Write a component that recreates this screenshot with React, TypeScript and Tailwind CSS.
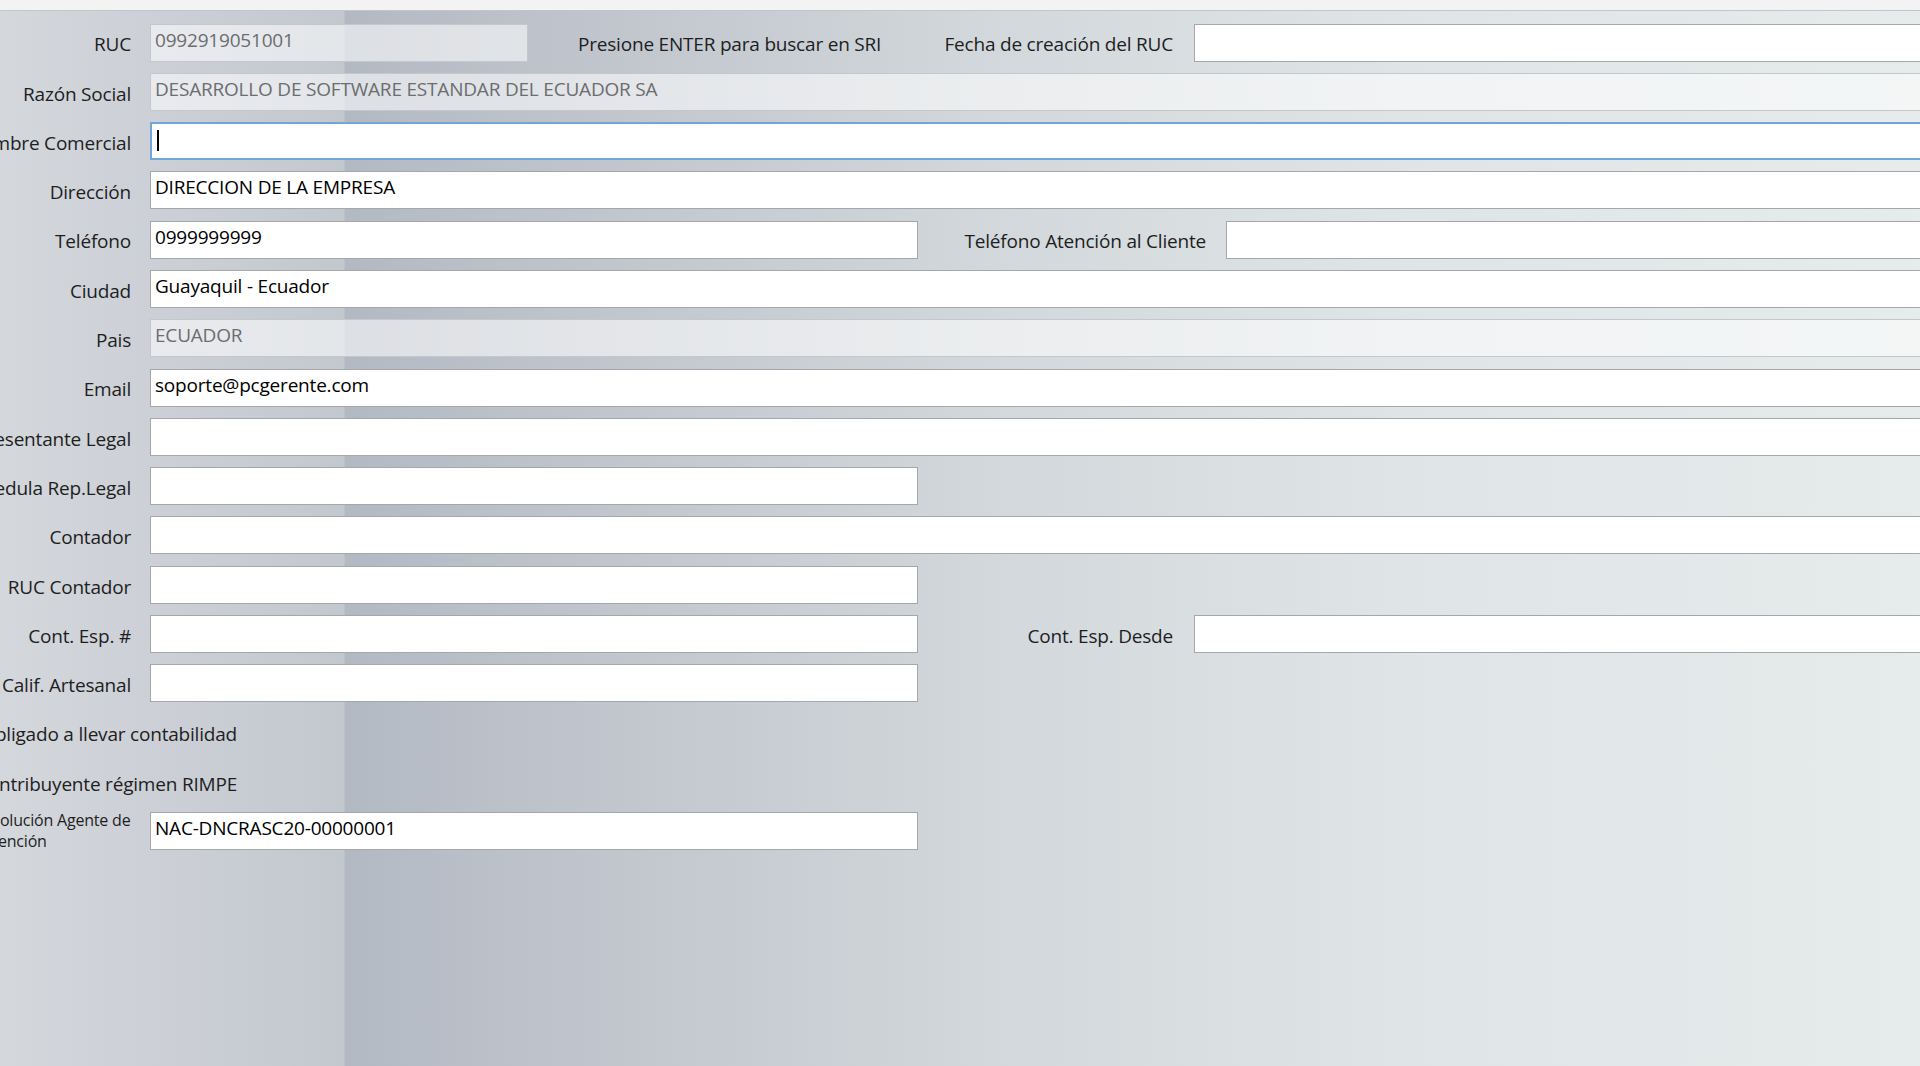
type Field = {
  label: string;
  value?: string;
  kind?: 'normal' | 'disabled' | 'focus';
  short?: boolean;
};

const font = { fontFamily: '"Open Sans", "Noto Sans", "Liberation Sans", sans-serif' };

function Input({ value, kind = 'normal', className = '' }: { value?: string; kind?: Field['kind']; className?: string }) {
  const base = 'h-[38px] px-[4px] pt-[2px] leading-[26px] text-[19px] tracking-[-0.2px] whitespace-nowrap overflow-hidden flex items-start';
  const look =
    kind === 'disabled'
      ? 'bg-white/55 border border-[#c4c7cb] text-[#6b6d70]'
      : kind === 'focus'
        ? 'bg-white border-2 border-[#72a5d8] text-black'
        : 'bg-white border border-[#a5a7aa] text-black';
  return (
    <div className={`${base} ${look} ${className}`}>
      {kind === 'focus' && <span className="mt-[4px] ml-[1px] w-[2px] h-[21px] bg-black" />}
      {value}
    </div>
  );
}

function Label({ text, w = 'w-[131px]' }: { text: string; w?: string }) {
  return (
    <div className={`${w} shrink-0 pt-[4px] flex justify-end whitespace-nowrap text-[19px] tracking-[-0.2px] text-[#1e1e1e]`}>
      <span>{text}</span>
    </div>
  );
}

function Row({ f }: { f: Field }) {
  return (
    <div className="h-[38px] flex items-center gap-[19px]">
      <Label text={f.label} />
      <Input value={f.value} kind={f.kind} className={f.short ? 'w-[768px]' : 'flex-1'} />
    </div>
  );
}

const mid: Field[] = [
  { label: 'Razón Social', value: 'DESARROLLO DE SOFTWARE ESTANDAR DEL ECUADOR SA', kind: 'disabled' },
  { label: 'Nombre Comercial', kind: 'focus' },
  { label: 'Dirección', value: 'DIRECCION DE LA EMPRESA' },
];

const lower: Field[] = [
  { label: 'Ciudad', value: 'Guayaquil - Ecuador' },
  { label: 'Pais', value: 'ECUADOR', kind: 'disabled' },
  { label: 'Email', value: 'soporte@pcgerente.com' },
  { label: 'Representante Legal' },
  { label: 'Cedula Rep.Legal', short: true },
  { label: 'Contador' },
  { label: 'RUC Contador', short: true },
];

export default function App() {
  return (
    <div
      className="w-full h-screen overflow-hidden bg-[linear-gradient(to_right,#d4d7dc_0px,#c3c8cf_344px,#b3b9c3_345px,#c3c8cf_650px,#d3d8dc_1000px,#dfe4e6_1400px,#e6ebec_1920px)]"
      style={font}
    >
      <div className="h-[11px] bg-[#f3f3f3] border-b border-[#c3c5c8]" />
      <div className="w-[1940px] pt-[12.5px] flex flex-col gap-[11.3px]">
        <div className="h-[38px] flex items-center">
          <Label text="RUC" />
          <Input value="0992919051001" kind="disabled" className="ml-[19px] w-[378px]" />
          <span className="ml-[50px] w-[302px] pt-[4px] whitespace-nowrap text-[19px] tracking-[-0.2px] text-[#1e1e1e]">
            Presione ENTER para buscar en SRI
          </span>
          <Label text="Fecha de creación del RUC" w="w-[293px]" />
          <Input className="ml-[21px] flex-1" />
        </div>
        {mid.map((f) => (
          <Row key={f.label} f={f} />
        ))}
        <div className="h-[38px] flex items-center">
          <Label text="Teléfono" />
          <Input value="0999999999" className="ml-[19px] w-[768px]" />
          <Label text="Teléfono Atención al Cliente" w="w-[288px]" />
          <Input className="ml-[20px] flex-1" />
        </div>
        {lower.map((f) => (
          <Row key={f.label} f={f} />
        ))}
        <div className="h-[38px] flex items-center">
          <Label text="Cont. Esp. #" />
          <Input className="ml-[19px] w-[768px]" />
          <Label text="Cont. Esp. Desde" w="w-[255px]" />
          <Input className="ml-[21px] flex-1" />
        </div>
        <Row f={{ label: 'Calif. Artesanal', short: true }} />
        <div className="h-[38px] flex items-center">
          <Label text="Obligado a llevar contabilidad" w="w-[237px]" />
        </div>
        <div className="h-[38px] flex items-center">
          <Label text="Contribuyente régimen RIMPE" w="w-[237px]" />
        </div>
        <div className="h-[38px] flex items-start gap-[19px]">
          <div className="w-[131px] shrink-0 flex justify-end">
            <p className="w-[165px] shrink-0 -mr-[8px] -mt-[2px] text-[16px] leading-[21px] tracking-[-0.2px] text-[#1e1e1e]">
              Resolución Agente de Retención
            </p>
          </div>
          <Input value="NAC-DNCRASC20-00000001" className="w-[768px]" />
        </div>
      </div>
    </div>
  );
}
